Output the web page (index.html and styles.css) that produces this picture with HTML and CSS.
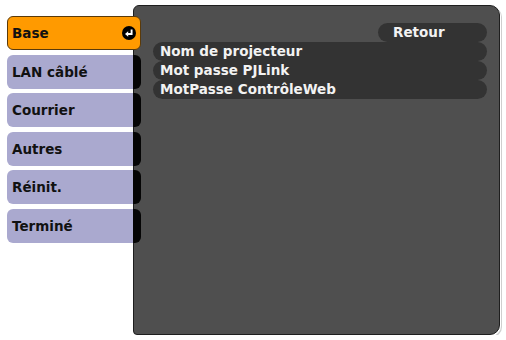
FILE: index.html
```html
<!DOCTYPE html>
<html>
<head>
<meta charset="utf-8">
<link rel="stylesheet" href="styles.css">
</head>
<body>
<div class="screen">
  <div class="menu">
    <div class="item active"><span>Base</span>
      <svg class="enter" viewBox="0 0 14 14" width="14" height="14"><circle cx="7" cy="7" r="7" fill="#000"/><path d="M9.6 3.4 V8 H5.5" fill="none" stroke="#fff" stroke-width="1.9"/><polygon points="3,8 6.2,5.2 6.2,10.8" fill="#fff"/></svg>
    </div>
    <div class="item">LAN câblé</div>
    <div class="item">Courrier</div>
    <div class="item">Autres</div>
    <div class="item">Réinit.</div>
    <div class="item">Terminé</div>
  </div>
  <div class="panel">
    <div class="retour-line"><div class="retour">Retour</div></div>
    <div class="row">Nom de projecteur</div>
    <div class="row">Mot passe PJLink</div>
    <div class="row">MotPasse ContrôleWeb</div>
  </div>
</div>
</body>
</html>
```
FILE: styles.css
```css
html, body {
  margin: 0;
  padding: 0;
  background: #ffffff;
}
body {
  font-family: "DejaVu Sans", "Liberation Sans", sans-serif;
  font-weight: bold;
}
.screen {
  display: flex;
  align-items: flex-start;
  padding: 5px 0 0 7px;
}
.menu {
  position: relative;
  z-index: 2;
  width: 134px;
  display: flex;
  flex-direction: column;
  gap: 4.6px;
  padding-top: 11px;
}
.item {
  height: 34px;
  box-sizing: border-box;
  border-radius: 6px;
  background: linear-gradient(90deg, #aaa9cf 126px, #050505 126px);
  color: #111;
  font-size: 13.5px;
  line-height: 34px;
  padding-left: 5px;
  display: flex;
  align-items: center;
  justify-content: space-between;
}
.item.active {
  background: #ff9a00;
  border: 1px solid #5a3a0a;
  padding-left: 4px;
  padding-right: 4px;
}
.enter {
  display: block;
}
.panel {
  margin-left: -8px;
  width: 367px;
  height: 330px;
  box-sizing: border-box;
  background: #4f4f4f;
  border: 1px solid #1e1e1e;
  border-radius: 6px 10px 10px 4px;
  padding: 17px 12px 0 19px;
  box-shadow: 1px 1px 0 #ffffff, 2px 2px 0 #cfcfcf;
}
.retour-line {
  display: flex;
  justify-content: flex-end;
}
.retour {
  width: 109px;
  height: 19px;
  box-sizing: border-box;
  border-radius: 10px;
  background: #333333;
  color: #f2f2f2;
  font-size: 13.5px;
  line-height: 19px;
  padding-left: 15px;
}
.row {
  height: 19px;
  border-radius: 10px;
  background: #333333;
  color: #f2f2f2;
  font-size: 13.5px;
  line-height: 19px;
  padding-left: 7px;
  white-space: nowrap;
}
```
